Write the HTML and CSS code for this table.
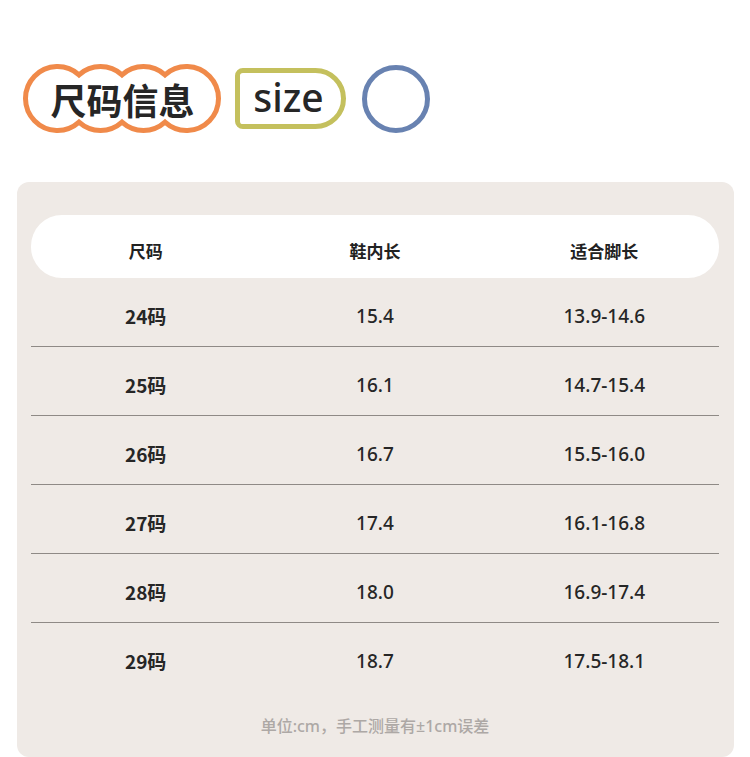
FILE: index.html
```html
<!DOCTYPE html>
<html lang="zh">
<head>
<meta charset="utf-8">
<link rel="stylesheet" href="styles.css">
</head>
<body>
<div class="page">
  <div class="title-row">
    <div class="cloud">
      <svg class="cloud-svg" width="198" height="71" viewBox="0 0 198 71">
        <path d="M56 11.8 A32 32 0 0 1 99 11.8 A32 32 0 0 1 142 11.8 A32 32 0 1 1 142 59.2 A32 32 0 0 1 99 59.2 A32 32 0 0 1 56 59.2 A32 32 0 1 1 56 11.8 Z" fill="#fff" stroke="#F08A4A" stroke-width="5"/>
      </svg>
      <span class="cloud-text">尺码信息</span>
    </div>
    <div class="size-tag">size</div>
    <div class="ring"></div>
  </div>

  <div class="card">
    <div class="head">
      <span>尺码</span><span>鞋内长</span><span>适合脚长</span>
    </div>
    <div class="row"><span class="c1">24码</span><span>15.4</span><span>13.9-14.6</span></div>
    <div class="row"><span class="c1">25码</span><span>16.1</span><span>14.7-15.4</span></div>
    <div class="row"><span class="c1">26码</span><span>16.7</span><span>15.5-16.0</span></div>
    <div class="row"><span class="c1">27码</span><span>17.4</span><span>16.1-16.8</span></div>
    <div class="row"><span class="c1">28码</span><span>18.0</span><span>16.9-17.4</span></div>
    <div class="row last"><span class="c1">29码</span><span>18.7</span><span>17.5-18.1</span></div>
    <div class="note">单位:cm，手工测量有±1cm误差</div>
  </div>
</div>
</body>
</html>
```

FILE: styles.css
```css
* { box-sizing: border-box; }
html, body { margin: 0; padding: 0; background: #fff; }
body {
  font-family: "Noto Sans CJK SC", "Noto Sans", sans-serif;
  color: #222;
  width: 750px;
  height: 757px;
  overflow: hidden;
}
.page { padding: 63px 16px 0 17px; }

.title-row {
  display: flex;
  align-items: center;
  height: 71px;
  padding-left: 6px;
  gap: 12px;
}
.cloud {
  position: relative;
  width: 198px;
  height: 71px;
}
.cloud-svg { position: absolute; left: 0; top: 0; }
.cloud-text {
  position: absolute;
  left: 0; right: 0; top: 0; bottom: 0;
  display: flex;
  align-items: center;
  justify-content: center;
  font-size: 36px;
  font-weight: 700;
  color: #262626;
  padding-top: 1px;
  padding-left: 1px;
}
.size-tag {
  width: 111px;
  height: 61px;
  border: 5px solid #C4C05D;
  border-radius: 8px 31px 31px 8px;
  display: flex;
  align-items: center;
  justify-content: center;
  font-family: "Noto Sans", sans-serif;
  font-size: 39px;
  font-weight: 500;
  color: #262626;
  padding-right: 4px;
  padding-bottom: 4px;
  margin-left: 2px;
}
.ring {
  width: 68px;
  height: 68px;
  border: 5px solid #6882B1;
  border-radius: 50%;
  margin-left: 4px;
}

.card {
  margin-top: 48px;
  width: 717px;
  height: 575px;
  background: #EFEAE6;
  border-radius: 12px;
  padding: 33px 15px 0 14px;
}
.head, .row {
  display: grid;
  grid-template-columns: 1fr 1fr 1fr;
  text-align: center;
}
.head {
  height: 63px;
  background: #fff;
  border-radius: 31px;
  align-items: center;
  font-size: 17px;
  font-weight: 700;
  color: #222;
  padding-top: 7px;
}
.row {
  height: 69px;
  padding-top: 26px;
  line-height: 24px;
  border-bottom: 1px solid #8F8A86;
  font-family: "Noto Sans", "Noto Sans CJK SC", sans-serif;
  font-size: 19px;
  font-weight: 500;
  color: #262626;
}
.row.last { border-bottom: none; }
.row .c1 {
  font-family: "Noto Sans CJK SC", sans-serif;
  font-weight: 700;
}
.note {
  margin-top: 21px;
  text-align: center;
  font-family: "Noto Sans", "Noto Sans CJK SC", sans-serif;
  font-size: 16px;
  font-weight: 500;
  color: #ADA8A5;
}
```
